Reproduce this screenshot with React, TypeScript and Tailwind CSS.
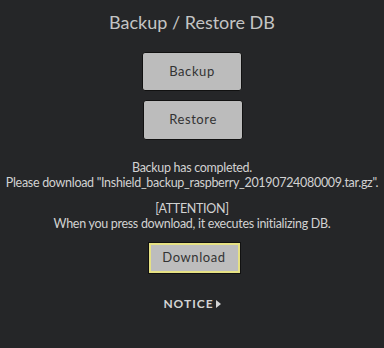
export default function App() {
  return (
    <div
      className="w-[384px] h-[348px] bg-[#252628] flex flex-col items-center text-[#c9c9c9]"
      style={{ fontFamily: 'Lato, "Noto Sans", sans-serif' }}
    >
      {/* Title */}
      <h1 className="mt-[9px] text-[18px] leading-[26px] text-[#c4c4c4]">Backup / Restore DB</h1>

      {/* Actions */}
      <button className="mt-[17px] w-[100px] h-[39px] rounded-[3px] border border-[#111] bg-[#bcbcbc] text-[13px] tracking-[0.6px] text-[#333]">
        Backup
      </button>
      <button className="mt-[9px] ml-[2px] w-[100px] h-[40px] rounded-[3px] border border-[#111] bg-[#bcbcbc] text-[13px] tracking-[0.6px] text-[#333]">
        Restore
      </button>

      {/* Result */}
      <div className="mt-[20px] text-center text-[12.5px] leading-[15px] tracking-[-0.3px] text-[#d2d2d2]">
        <p>Backup has completed.</p>
        <p className="whitespace-nowrap">
          Please download "Inshield_backup_raspberry_20190724080009.tar.gz".
        </p>
      </div>

      <div className="mt-[11px] text-center text-[12.5px] leading-[15px] tracking-[-0.3px] text-[#d2d2d2]">
        <p>[ATTENTION]</p>
        <p>When you press download, it executes initializing DB.</p>
      </div>

      <button className="mt-[11px] ml-[4px] w-[93px] h-[32px] border border-[#111] shadow-[inset_0_0_0_2px_#e6e184] bg-[#bdbdbd] text-[13px] tracking-[0.6px] text-[#333]">
        Download
      </button>

      <a className="mt-[21px] flex items-center gap-[2px] text-[12px] font-bold tracking-[1px] text-[#d4d4d4]">
        NOTICE
        <svg width="5" height="8" viewBox="0 0 5 8" className="fill-[#d4d4d4]">
          <path d="M0 0 L5 4 L0 8 Z" />
        </svg>
      </a>
    </div>
  );
}
